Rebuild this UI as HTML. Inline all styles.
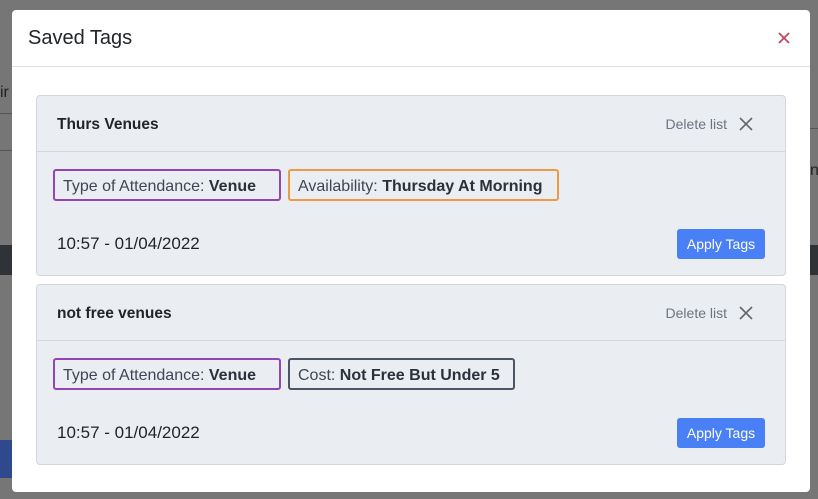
<!DOCTYPE html>
<html><head><style>
body{margin:0;width:818px;height:499px;background:#767676;position:relative;overflow:hidden;font-family:"Liberation Sans",sans-serif;}
.bg{position:absolute}
.modal{position:absolute;left:12px;top:10px;width:798px;height:482px;background:#fff;border-radius:4px}
.mh{height:56px;border-bottom:1px solid #dee2e6;position:relative}
.mh h2{margin:0;position:absolute;left:16px;top:17px;font-size:20px;font-weight:normal;color:#212529}
.mx{position:absolute;right:18px;top:20px;width:16px;height:16px}
.card{position:absolute;left:24px;width:748px;height:179px;background:#eaedf2;border:1px solid #d3d6db;border-radius:4px}
.ch{height:55px;border-bottom:1px solid #d3d6db;position:relative}
.ch b{position:absolute;left:20px;top:20px;font-size:15.5px;color:#212529}
.del{position:absolute;right:58px;top:20px;font-size:14px;color:#6c757d}
.dx{position:absolute;right:32px;top:21px;width:14px;height:14px}
.cb{position:relative;height:123px}
.tag{position:absolute;top:17px;height:32px;box-sizing:border-box;border:2px solid;border-radius:3px;font-size:16px;color:#3e4654;line-height:28px;padding:2px 8px 0;white-space:nowrap}
.tag b{color:#2b303a}
.date{position:absolute;left:20px;top:82px;font-size:17px;color:#212529}
.btn{position:absolute;right:20px;top:77px;width:88px;height:30px;background:#4a80f5;border-radius:3px;color:#fff;font-size:14px;line-height:30px;text-align:center}
</style></head><body>
<div class="bg" style="left:0;top:84px;font-size:16px;color:#222">ir</div>
<div class="bg" style="left:0;top:113px;width:12px;height:1px;background:#555"></div>
<div class="bg" style="left:0;top:150px;width:12px;height:1px;background:#555"></div>
<div class="bg" style="left:0;top:245px;width:12px;height:30px;background:#2f3237"></div>
<div class="bg" style="left:810px;top:245px;width:8px;height:30px;background:#2f3237"></div>
<div class="bg" style="left:810px;top:128px;width:8px;height:1px;background:#555"></div>
<div class="bg" style="left:810px;top:162px;font-size:16px;color:#222">n</div>
<div class="bg" style="left:0;top:440px;width:12px;height:38px;background:#2e4a8c"></div>
<div class="modal">
 <div class="mh"><h2>Saved Tags</h2>
 <svg class="mx" viewBox="0 0 16 16"><path d="M3 3L13 13M13 3L3 13" stroke="#c0485a" stroke-width="1.8"/></svg></div>
 <div class="card" style="top:85px">
  <div class="ch"><b>Thurs Venues</b><span class="del">Delete list</span>
  <svg class="dx" viewBox="0 0 14 14"><path d="M1 1L13 13M13 1L1 13" stroke="#666" stroke-width="1.6"/></svg></div>
  <div class="cb">
  <div class="tag" style="left:16px;width:228px;border-color:#9445b5">Type of Attendance: <b>Venue</b></div>
  <div class="tag" style="left:251px;width:271px;border-color:#ec9a45">Availability: <b>Thursday At Morning</b></div>
  <div class="date">10:57 - 01/04/2022</div>
  <div class="btn">Apply Tags</div>
  </div>
 </div>
 <div class="card" style="top:274px">
  <div class="ch"><b>not free venues</b><span class="del">Delete list</span>
  <svg class="dx" viewBox="0 0 14 14"><path d="M1 1L13 13M13 1L1 13" stroke="#666" stroke-width="1.6"/></svg></div>
  <div class="cb">
  <div class="tag" style="left:16px;width:228px;border-color:#9445b5">Type of Attendance: <b>Venue</b></div>
  <div class="tag" style="left:251px;width:227px;border-color:#4c5566">Cost: <b>Not Free But Under 5</b></div>
  <div class="date">10:57 - 01/04/2022</div>
  <div class="btn">Apply Tags</div>
  </div>
 </div>
</div>
</body></html>
